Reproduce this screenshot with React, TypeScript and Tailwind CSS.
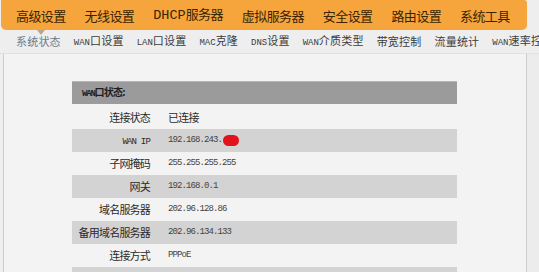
const topNav = ["高级设置", "无线设置", "DHCP服务器", "虚拟服务器", "安全设置", "路由设置", "系统工具"];

const subNav = ["系统状态", "WAN口设置", "LAN口设置", "MAC克隆", "DNS设置", "WAN介质类型", "带宽控制", "流量统计", "WAN速率控制"];

const rows = [
  { label: "连接状态", value: "已连接", cjk: true },
  { label: "WAN IP", value: "192.168.243.", mask: true },
  { label: "子网掩码", value: "255.255.255.255" },
  { label: "网关", value: "192.168.0.1" },
  { label: "域名服务器", value: "202.96.128.86" },
  { label: "备用域名服务器", value: "202.96.134.133" },
  { label: "连接方式", value: "PPPoE" },
  { label: "", value: "" },
];

// latin runs in the old firmware look like a narrow half-width font
function Mixed({ text, latinCls }: { text: string; latinCls: string }) {
  const parts = text.split(/([A-Za-z0-9. ]+)/).filter(Boolean);
  return (
    <span>
      {parts.map((p, i) =>
        /[A-Za-z0-9]/.test(p) ? (
          <span key={i} className={latinCls}>{p}</span>
        ) : (
          <span key={i}>{p}</span>
        )
      )}
    </span>
  );
}

export default function App() {
  const cjk = { fontFamily: '"Noto Sans CJK SC", "Noto Sans", sans-serif' };

  return (
    <div className="w-[539px] h-[272px] overflow-hidden bg-[#eeeeee] flex flex-col" style={cjk}>
      <div className="h-[30px] w-[526px] ml-[1px] shrink-0 bg-[#f5a53b] rounded-b-[5px] rounded-tr-[3px] flex items-center pl-[15px] gap-[19px] text-[13px] text-[#3a2404] tracking-[-0.6px] whitespace-nowrap">
        {topNav.map(t => (
          <span key={t} className="leading-none">
            <Mixed text={t} latinCls="font-['Liberation_Mono'] text-[13.5px] tracking-[0px]" />
          </span>
        ))}
      </div>

      <div className="relative h-[23px] shrink-0 flex items-center pl-[16px] gap-[13px] text-[11px] text-[#3c3c3c] tracking-[0.2px] whitespace-nowrap">
        <div className="absolute left-[37px] top-0 w-0 h-0 border-l-[4px] border-r-[4px] border-t-[5px] border-l-transparent border-r-transparent border-t-[#b8a78e]" />
        {subNav.map((t, i) => (
          <span key={t} className={i === 0 ? "text-[#6b7c8c]" : ""}>
            <Mixed text={t} latinCls="font-['Liberation_Mono'] text-[9px] tracking-[0px]" />
          </span>
        ))}
      </div>

      <div className="flex flex-1 min-h-0 border-t border-[#e2e2e2]">
        <div className="w-[524px] ml-[3px] bg-[#f3f3f3] border-l border-r border-[#cdcdcd] pt-[27px] pl-[68px]">
          <div className="w-[385px]">
            <div className="h-[23px] bg-[#9b9b9b] border-t border-[#b5b5b5] flex items-center pl-[10px] text-[10px] font-bold text-[#1f1f1f] tracking-[-0.8px]">
              <Mixed text="WAN口状态:" latinCls="font-['Liberation_Mono'] text-[9px] tracking-[-1.2px]" />
            </div>
            <div className="h-[2px]" />
            {rows.map((r, i) => (
              <div key={i} className={"h-[23px] flex items-center " + (i % 2 === 1 ? "bg-[#d3d3d3]" : "")}>
                <div className="w-[78px] text-right text-[11px] text-[#2a2a2a] tracking-[-0.8px] whitespace-nowrap">
                  <Mixed text={r.label} latinCls="font-['Liberation_Mono'] text-[9px] tracking-[-0.8px]" />
                </div>
                <div className="pl-[18px] flex items-center">
                  {r.cjk ? (
                    <span className="text-[11px] text-[#2a2a2a] tracking-[-0.8px]">{r.value}</span>
                  ) : (
                    <span className="font-['Liberation_Mono'] text-[9px] text-[#444] tracking-[-0.9px]">{r.value}</span>
                  )}
                  {r.mask && <span className="ml-[1px] w-[16px] h-[11px] rounded-full bg-[#e0141a]" />}
                </div>
              </div>
            ))}
          </div>
        </div>
        <div className="flex-1 bg-[#ececec]" />
      </div>
    </div>
  );
}
